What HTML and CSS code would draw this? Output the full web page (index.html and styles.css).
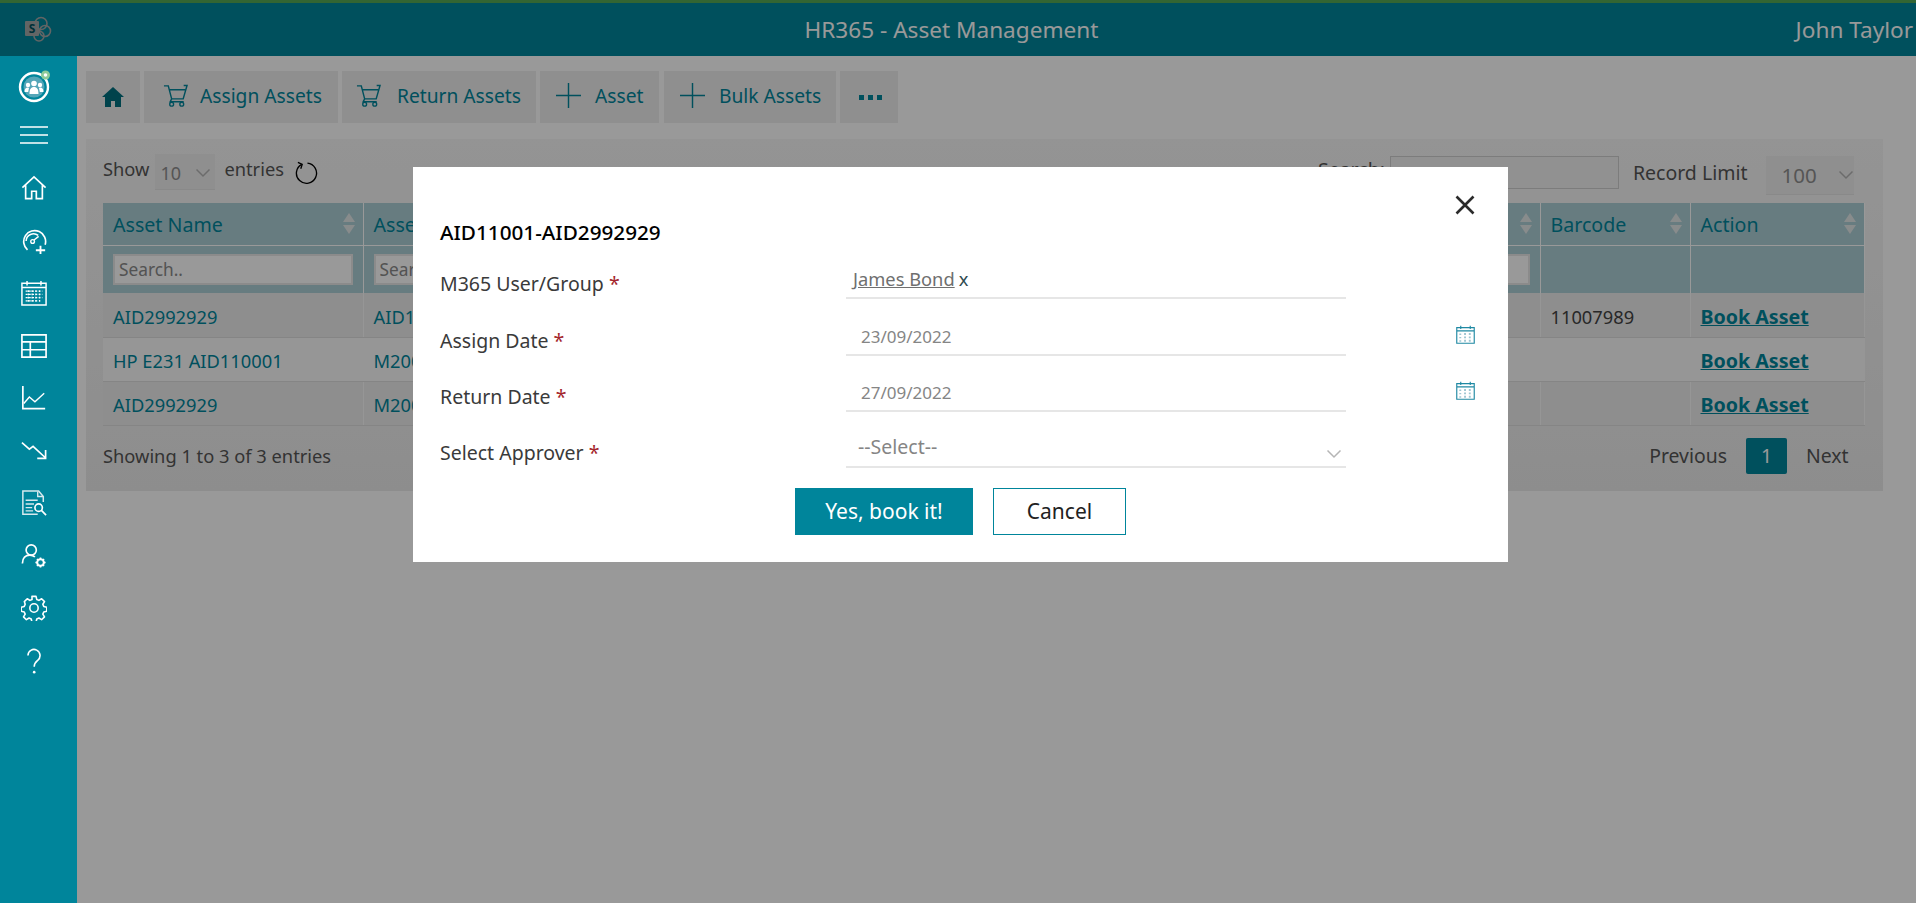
FILE: index.html
```html
<!DOCTYPE html>
<html lang="en">
<head>
    <meta charset="UTF-8">
    <title>HR365 - Asset Management</title>
    <link rel="stylesheet" href="styles.css">
</head>
<body>
    <svg class="sprites" width="0" height="0">
        <symbol id="cart" viewBox="0 0 26 24">
            <path d="M1 2h4.500l3.500 13.500h12L25 1.500h-3.500M6.500 6h16.500M9 15.500 7.500 18.500h14" fill="none" stroke="currentColor" stroke-width="1.500"/>
            <circle cx="9" cy="21" r="2" fill="none" stroke="currentColor" stroke-width="1.400"/>
            <circle cx="19.500" cy="21" r="2" fill="none" stroke="currentColor" stroke-width="1.400"/>
        </symbol>
        <symbol id="plus" viewBox="0 0 26 26">
            <path d="M0 13h26M13 0v26" stroke="currentColor" stroke-width="1.500"/>
        </symbol>
        <symbol id="chevron" viewBox="0 0 16 10">
            <path d="M1.500 1.500 8 8l6.500-6.500" fill="none" stroke="currentColor" stroke-width="1.500"/>
        </symbol>
        <symbol id="calendar" viewBox="0 0 20 20">
            <path d="M.8 2.800h18.400v16.400H.8zM.8 6.200h18.400M5 .8v3.500M15 .8v3.500" fill="none" stroke="#1f89a3" stroke-width="1.200"/>
            <path d="M3.500 9h2v1.500h-2zM8.500 8.500h2v2h-2zM13.500 8.500h2v2h-2zM3.500 12.500h2V14h-2zM8.500 12h2v2h-2zM13.500 12h2v2h-2zM3.500 16h2v1.500h-2zM8.500 15.500h2v2h-2zM13.500 15.500h2v2h-2z" fill="#9fc6d2"/>
        </symbol>
    </svg>

    <div class="top-strip"></div>
    <header class="app-header">
        <svg class="sp-logo" viewBox="0 0 28 28">
            <circle cx="17" cy="7.500" r="6" fill="none" stroke="#a3a8a8" stroke-width="1.600"/>
            <circle cx="21" cy="15" r="5.500" fill="none" stroke="#a3a8a8" stroke-width="1.600"/>
            <circle cx="15" cy="20" r="5" fill="none" stroke="#a3a8a8" stroke-width="1.600"/>
            <rect x="1" y="5" width="14" height="15" rx="1" fill="#a3a8a8"/>
            <text x="8" y="17" class="sp-letter">S</text>
        </svg>
        <div class="app-title">HR365 - Asset Management</div>
        <div class="app-user">John Taylor</div>
    </header>

    <div class="app-body">
        <nav class="sidebar">
            <svg class="side-logo" viewBox="0 0 34 34">
                <circle cx="16" cy="18" r="14" fill="none" stroke="#fff" stroke-width="2.400"/>
                <circle cx="16" cy="18" r="10.500" fill="#55a6b8"/>
                <circle cx="16" cy="14.500" r="2.800" fill="#fff"/>
                <circle cx="10" cy="16" r="2.200" fill="#fff"/>
                <circle cx="22" cy="16" r="2.200" fill="#fff"/>
                <path d="M11.500 25c0-5 1.500-7 4.500-7s4.500 2 4.500 7zM6.500 23c0-3 1-4.500 3.500-4.500l1 .5-.8 4zM25.500 23c0-3-1-4.500-3.500-4.500l-1 .5.800 4z" fill="#fff"/>
                <circle cx="27.500" cy="6" r="4.500" fill="#8ecb9a"/>
                <circle cx="27.500" cy="6" r="1.800" fill="#fff"/>
            </svg>
            <svg class="side-icon side-menu" viewBox="0 0 28 28">
                <path d="M0 6h28M0 14h28M0 22h28" stroke="#fff" stroke-width="1.700"/>
            </svg>
            <svg class="side-icon" viewBox="0 0 28 28">
                <path d="M1.500 13.500 14 2l12.500 11.500M5 11v14.500h6.500v-8h5v8H23V11" fill="none" stroke="#fff" stroke-width="1.800"/>
            </svg>
            <svg class="side-icon" viewBox="0 0 28 28">
                <path d="M7 23.500a11.800 11.800 0 1 1 19-5.500" fill="none" stroke="#fff" stroke-width="1.800"/>
                <path d="M5.500 14a8 8 0 0 1 13-6" fill="none" stroke="#fff" stroke-width="1.600"/>
                <circle cx="12.500" cy="14.500" r="2" fill="none" stroke="#fff" stroke-width="1.500"/>
                <path d="M14 13l5-4" stroke="#fff" stroke-width="1.500"/>
                <path d="M16 24h10M21 19v10" stroke="#fff" stroke-width="2"/>
            </svg>
            <svg class="side-icon" viewBox="0 0 28 28">
                <path d="M1 3.500h26v23.500H1zM1 8h26M6.500 1v5M21.500 1v5" fill="none" stroke="#fff" stroke-width="1.600"/>
                <path d="M5 12h18M5 15.500h18M5 19h18M5 22.500h14M8 11v13M12 11v13M16 11v13M20 11v13" stroke="#fff" stroke-width="1.500" stroke-dasharray="2 1.500"/>
            </svg>
            <svg class="side-icon" viewBox="0 0 28 28">
                <path d="M1 2h26v24H1zM1 9.500h26M1 18h26M10 9.500V26" fill="none" stroke="#fff" stroke-width="1.800"/>
            </svg>
            <svg class="side-icon" viewBox="0 0 28 28">
                <path d="M2 1v24.500h24" fill="none" stroke="#fff" stroke-width="1.800"/>
                <path d="M3 20l6-7 6 5 10-9" fill="none" stroke="#fff" stroke-width="1.500"/>
            </svg>
            <svg class="side-icon" viewBox="0 0 28 28">
                <path d="M1 5l8 7 4-3 13 12M26.500 13v9h-9" fill="none" stroke="#fff" stroke-width="1.800"/>
            </svg>
            <svg class="side-icon" viewBox="0 0 28 28">
                <path d="M24 13V7l-5-6H2v25h16" fill="none" stroke="#d7e9ee" stroke-width="1.600"/>
                <path d="M18 1.500V7h6M5 11h13M5 15h9M5 19h7M5 22.500h8" fill="none" stroke="#d7e9ee" stroke-width="1.500"/>
                <circle cx="19" cy="19" r="4" fill="none" stroke="#fff" stroke-width="1.800"/>
                <path d="M22 22l5 5" stroke="#fff" stroke-width="1.800"/>
            </svg>
            <svg class="side-icon" viewBox="0 0 28 28">
                <circle cx="11" cy="7.500" r="5.500" fill="none" stroke="#fff" stroke-width="1.800"/>
                <path d="M1.500 22c0-6 3.500-9 8-9 2 0 4 .7 5.500 2" fill="none" stroke="#fff" stroke-width="1.800"/>
                <circle cx="21" cy="21" r="3.600" fill="none" stroke="#fff" stroke-width="2.200"/>
                <path d="M21 15.500v11M15.500 21h11M17.200 17.200l7.600 7.600M24.800 17.200l-7.600 7.600" stroke="#fff" stroke-width="1.800" stroke-dasharray="1.800 7.400 1.800"/>
            </svg>
            <svg class="side-icon" viewBox="0 0 28 28">
                <circle cx="14" cy="14" r="4.500" fill="none" stroke="#fff" stroke-width="1.700"/>
                <path d="M11.800 1.500h4.400l.8 3.300 2.300 1 2.900-1.800 3.100 3.100-1.800 2.900 1 2.300 3.300.8v4.400l-3.300.8-1 2.300 1.800 2.900-3.100 3.100-2.900-1.800-2.300 1-.8 3.300h-4.400l-.8-3.300-2.300-1-2.900 1.800-3.100-3.100 1.800-2.900-1-2.300-3.300-.8v-4.400l3.300-.8 1-2.300L3.600 7.100l3.100-3.100 2.900 1.800 2.300-1z" fill="none" stroke="#fff" stroke-width="1.700" stroke-linejoin="round"/>
            </svg>
            <svg class="side-icon" viewBox="0 0 28 28">
                <path d="M7.500 8a6.500 6.500 0 1 1 10.500 5.200c-2.500 2-3.800 3-3.800 7" fill="none" stroke="#fff" stroke-width="1.700"/>
                <circle cx="14.200" cy="26" r="1.400" fill="#fff"/>
            </svg>
        </nav>

        <main class="content">
            <div class="toolbar">
                <a class="tool-btn tool-home">
                    <svg class="home-icon" viewBox="0 0 22 20"><path d="M11 0 0 10h3v10h6v-6h4v6h6V10h3z" fill="currentColor"/></svg>
                </a>
                <a class="tool-btn tool-assign"><svg class="tool-icon"><use href="#cart"/></svg>Assign Assets</a>
                <a class="tool-btn tool-return"><svg class="tool-icon"><use href="#cart"/></svg>Return Assets</a>
                <a class="tool-btn tool-asset"><svg class="tool-icon"><use href="#plus"/></svg>Asset</a>
                <a class="tool-btn tool-bulk"><svg class="tool-icon"><use href="#plus"/></svg>Bulk Assets</a>
                <a class="tool-btn tool-more"><span class="dots"><i></i><i></i><i></i></span></a>
            </div>

            <section class="panel">
                <div class="controls">
                    <div class="controls-left">
                        <span>Show</span>
                        <div class="select select-small"><span>10</span><svg class="chevron"><use href="#chevron"/></svg></div>
                        <span>entries</span>
                        <svg class="refresh" viewBox="0 0 24 24">
                            <path d="M7 3.500a10.500 10.500 0 1 0 6-1.200" fill="none" stroke="#000" stroke-width="1.400"/>
                            <path d="M3 1.500l4.500 2L6 8" fill="none" stroke="#000" stroke-width="1.400"/>
                        </svg>
                    </div>
                    <div class="controls-right">
                        <span class="search-label">Search:</span>
                        <input class="search-box" type="text">
                        <span class="limit-label">Record Limit</span>
                        <div class="select select-limit"><span>100</span><svg class="chevron"><use href="#chevron"/></svg></div>
                    </div>
                </div>

                <table class="grid">
                    <colgroup>
                        <col class="col-name"><col class="col-name"><col class="col-mid"><col class="col-mid"><col class="col-mid"><col class="col-wide"><col class="col-wide">
                        <col class="col-barcode"><col class="col-action">
                    </colgroup>
                    <thead>
                        <tr class="head-row">
                            <th>Asset Name<i class="sort"></i></th>
                            <th>Asset<i class="sort"></i></th>
                            <th><i class="sort"></i></th>
                            <th><i class="sort"></i></th>
                            <th><i class="sort"></i></th>
                            <th><i class="sort"></i></th>
                            <th><i class="sort"></i></th>
                            <th>Barcode<i class="sort"></i></th>
                            <th>Action<i class="sort"></i></th>
                        </tr>
                        <tr class="filter-row">
                            <td><input type="text" placeholder="Search.."></td>
                            <td><input type="text" placeholder="Search.."></td>
                            <td><input type="text"></td>
                            <td><input type="text"></td>
                            <td><input type="text"></td>
                            <td><input type="text"></td>
                            <td><input type="text"></td>
                            <td></td>
                            <td></td>
                        </tr>
                    </thead>
                    <tbody>
                        <tr>
                            <td class="cell-link">AID2992929</td>
                            <td class="cell-link">AID11001</td>
                            <td></td><td></td><td></td><td></td><td></td>
                            <td>11007989</td>
                            <td><a class="book-link">Book Asset</a></td>
                        </tr>
                        <tr>
                            <td class="cell-link">HP E231 AID110001</td>
                            <td class="cell-link">M2001</td>
                            <td></td><td></td><td></td><td></td><td></td>
                            <td></td>
                            <td><a class="book-link">Book Asset</a></td>
                        </tr>
                        <tr>
                            <td class="cell-link">AID2992929</td>
                            <td class="cell-link">M2002</td>
                            <td></td><td></td><td></td><td></td><td></td>
                            <td></td>
                            <td><a class="book-link">Book Asset</a></td>
                        </tr>
                    </tbody>
                </table>

                <div class="table-foot">
                    <span>Showing 1 to 3 of 3 entries</span>
                    <div class="pager">
                        <span>Previous</span>
                        <span class="page-current">1</span>
                        <span>Next</span>
                    </div>
                </div>
            </section>
        </main>
    </div>

    <div class="overlay"></div>

    <!-- booking dialog -->
    <div class="modal">
        <svg class="modal-close" viewBox="0 0 20 20"><path d="M1.500 1.500l17 17M18.500 1.500l-17 17" stroke="#2b2b2b" stroke-width="2.600"/></svg>
        <h2 class="modal-title">AID11001-AID2992929</h2>
        <div class="form-row">
            <label>M365 User/Group <b>*</b></label>
            <div class="field field-user"><a>James Bond</a> <span>x</span></div>
        </div>
        <div class="form-row">
            <label>Assign Date <b>*</b></label>
            <div class="field field-date">23/09/2022</div>
            <svg class="cal-icon"><use href="#calendar"/></svg>
        </div>
        <div class="form-row">
            <label>Return Date <b>*</b></label>
            <div class="field field-date">27/09/2022</div>
            <svg class="cal-icon"><use href="#calendar"/></svg>
        </div>
        <div class="form-row">
            <label>Select Approver <b>*</b></label>
            <div class="field field-select">--Select--<svg class="chevron"><use href="#chevron"/></svg></div>
        </div>
        <div class="modal-actions">
            <button class="btn-yes">Yes, book it!</button>
            <button class="btn-cancel">Cancel</button>
        </div>
    </div>
</body>
</html>
```

FILE: styles.css
```css
* {
    box-sizing: border-box;
}
html, body {
    height: 100%;
}
body {
    margin: 0;
    font-family: "Noto Sans", "Open Sans", sans-serif;
    font-size: 18.300px;
    color: #555;
    background-color: #fff;
    overflow: hidden;
}
.sprites {
    display: block;
    height: 0;
}
.top-strip {
    height: 3px;
    background-color: #55a855;
}
.app-header {
    display: grid;
    grid-template-columns: 1fr auto 1fr;
    align-items: center;
    height: 53px;
    padding: 0 3px 0 24px;
    background-color: #00859b;
    color: #fff;
    font-size: 22.600px;
}
.sp-logo {
    width: 28px;
    height: 28px;
}
.sp-letter {
    font-size: 12px;
    font-weight: 700;
    fill: #00505d;
    text-anchor: middle;
}
.app-title {
    padding-right: 34px;
}
.app-user {
    text-align: right;
}
.app-body {
    display: flex;
    height: 847px;
}

/* sidebar stays above the overlay */
.sidebar {
    position: relative;
    z-index: 20;
    flex: none;
    display: flex;
    flex-direction: column;
    align-items: center;
    gap: 26.500px;
    width: 77px;
    padding: 13px 10px 0 0;
    background-color: #00859b;
}
.side-logo {
    width: 34px;
    height: 34px;
    margin-left: 2px;
    margin-bottom: -7px;
}
.side-icon {
    width: 26px;
    height: 26px;
}
.side-menu {
    width: 28px;
    height: 28px;
    margin: -2px 0 0;
}
.content {
    flex: 1;
    padding: 15px 34px 0 9px;
}
.toolbar {
    display: flex;
    gap: 4px;
    height: 52px;
    margin-bottom: 16px;
}
.tool-btn {
    display: flex;
    align-items: center;
    padding: 0 0 3px 19px;
    background-color: #eee;
    color: #00859b;
    font-size: 19.200px;
}
.tool-home {
    width: 54px;
    padding: 0 0 0 16px;
}
.tool-assign, .tool-return {
    width: 194px;
}
.tool-return {
    padding-left: 14px;
}
.tool-return .tool-icon {
    margin-right: 16px;
}
.tool-asset {
    width: 119px;
    padding-left: 16px;
}
.tool-bulk {
    width: 172px;
    margin-left: 1px;
    padding-left: 16px;
}
.tool-more {
    width: 58px;
    padding: 0 0 0 19px;
}
.home-icon {
    width: 22px;
    height: 20px;
    color: #00707f;
}
.tool-icon {
    width: 25px;
    height: 25px;
    margin-right: 12px;
    flex: none;
}
.tool-asset .tool-icon, .tool-bulk .tool-icon {
    margin-right: 14px;
}
.dots {
    display: flex;
    gap: 4px;
}
.dots i {
    width: 5px;
    height: 5px;
    background-color: #00859b;
}
.panel {
    height: 352px;
    padding: 16px 18px 0 17px;
    background: linear-gradient(#f7f7f7, #ececec);
}
.controls {
    display: flex;
    justify-content: space-between;
    height: 48px;
}
.controls-left, .controls-right {
    display: flex;
    align-items: center;
}
.controls-left {
    height: 27px;
}
.controls-right {
    height: 34px;
}
.select {
    display: flex;
    align-items: center;
    justify-content: space-between;
    background-color: #efefef;
    color: #8e8e8e;
    border-bottom: 1px solid #e4e4e4;
}
.select-small {
    flex: none;
    width: 60px;
    height: 36px;
    margin: 7px 9px 0 6px;
    padding: 3px 4px 0 5px;
    font-size: 18px;
}
.select-limit {
    width: 88px;
    height: 39px;
    margin: 6px 11px 0 0;
    padding: 0 0 0 16px;
    font-size: 20.500px;
}
.chevron {
    width: 16px;
    height: 10px;
    color: #b5b5b5;
}
.refresh {
    flex: none;
    width: 23px;
    height: 23px;
    margin: 7px 0 0 11px;
}
.search-label {
    margin-bottom: 5px;
    font-size: 19.500px;
}
.search-box {
    width: 229px;
    height: 33px;
    margin: 0 14px 0 5px;
    border: 1px solid #cfcfcf;
    background-color: #f2f2f2;
}
.limit-label {
    margin: 1px 18px 0 0;
    font-size: 19.500px;
}
.grid {
    width: 1761px;
    table-layout: fixed;
    border-collapse: collapse;
}
.col-name {
    width: 260px;
}
.col-mid {
    width: 180px;
}
.col-wide {
    width: 188.500px;
}
.col-barcode {
    width: 150px;
}
.col-action {
    width: 174px;
}
.head-row th {
    position: relative;
    height: 42px;
    padding: 2px 10px 0;
    background-color: #accfd6;
    border-right: 1px solid #fff;
    border-bottom: 1px solid #fff;
    color: #00859b;
    font-size: 19.600px;
    font-weight: 400;
    text-align: left;
    white-space: nowrap;
    overflow: hidden;
}
/* sort arrows */
.sort {
    position: absolute;
    right: 8px;
    top: 10px;
    width: 12px;
    height: 21px;
}
.sort::before, .sort::after {
    content: "";
    position: absolute;
    left: 0;
    border-left: 6px solid transparent;
    border-right: 6px solid transparent;
}
.sort::before {
    top: 0;
    border-bottom: 9px solid #e3e9ea;
}
.sort::after {
    bottom: 0;
    border-top: 9px solid #e3e9ea;
}
.filter-row td {
    height: 48px;
    padding: 0 10px;
    background-color: #accfd6;
    border-right: 1px solid #fff;
}
.filter-row input {
    display: block;
    width: 100%;
    height: 31px;
    padding: 0 4px;
    border: 2px solid #e8e8e8;
    background-color: #fff;
    font: inherit;
    font-size: 17.300px;
}
.filter-row input::placeholder {
    color: #8a8a8a;
}
tbody td {
    height: 44px;
    padding: 3px 10px 0;
    background-color: #ededed;
    border-right: 1px solid #fbfbfb;
    border-bottom: 1px solid #dedede;
    color: #444;
    font-size: 18.300px;
    white-space: nowrap;
    overflow: hidden;
}
tbody tr:nth-child(even) td {
    background-color: #fbfbfb;
}
tbody .cell-link {
    color: #00859b;
}
.book-link {
    color: #00859b;
    font-weight: 700;
    text-decoration: underline;
    font-size: 19.600px;
}
.table-foot {
    display: flex;
    justify-content: space-between;
    align-items: center;
    padding: 12px 16px 0 0;
}
.pager {
    display: flex;
    align-items: center;
    gap: 19px;
    font-size: 19.400px;
}
.page-current {
    width: 41px;
    height: 36px;
    line-height: 36px;
    text-align: center;
    border-radius: 2px;
    background-color: #00859b;
    color: #fff;
}
.overlay {
    position: fixed;
    top: 0;
    left: 0;
    right: 0;
    bottom: 0;
    z-index: 10;
    background-color: rgba(0, 0, 0, 0.4);
}

/* booking dialog */
.modal {
    position: fixed;
    z-index: 30;
    top: 167px;
    left: 413px;
    width: 1095px;
    height: 395px;
    padding: 55px 27px 0;
    background-color: #fff;
    color: #333;
}
.modal-close {
    position: absolute;
    top: 28px;
    right: 33px;
    width: 20px;
    height: 20px;
}
.modal-title {
    margin: 0;
    font-size: 20.700px;
    line-height: 21px;
    font-weight: 500;
    color: #000;
}
.form-row {
    display: grid;
    grid-template-columns: 406px 500px 1fr;
    align-items: end;
    height: 56.300px;
}
.form-row label {
    padding-bottom: 2px;
    font-size: 19.500px;
    color: #3a3a3a;
}
.form-row b {
    font-weight: 400;
    color: #a4262c;
}
.field {
    display: flex;
    align-items: center;
    height: 36px;
    border-bottom: 2px solid #e6e6e6;
    color: #858585;
    font-size: 17px;
    padding-bottom: 1px;
}
.field-user {
    padding-left: 7px;
    gap: 4px;
    padding-bottom: 3px;
    font-size: 18.300px;
}
.field-user a {
    text-decoration: underline;
    color: #6f6f6f;
}
.field-user span {
    color: #2f4a50;
}
.field-date {
    padding-left: 15px;
}
.field-select {
    justify-content: space-between;
    padding: 0 4px 5px 12px;
    font-size: 19.500px;
}
.field-select .chevron {
    margin-top: 14px;
}
.cal-icon {
    justify-self: end;
    align-self: center;
    width: 19px;
    height: 19px;
    margin: 14px 6px 0 0;
}
.modal-actions {
    display: flex;
    justify-content: center;
    gap: 20px;
    margin-top: 20px;
}
.modal-actions button {
    height: 47px;
    padding-bottom: 2px;
    font: inherit;
    font-size: 21px;
    border: 1px solid #00859b;
}
.btn-yes {
    width: 178px;
    background-color: #00859b;
    color: #fff;
}
.btn-cancel {
    width: 133px;
    background-color: #fff;
    color: #222;
    font-size: 20.500px;
}
```
